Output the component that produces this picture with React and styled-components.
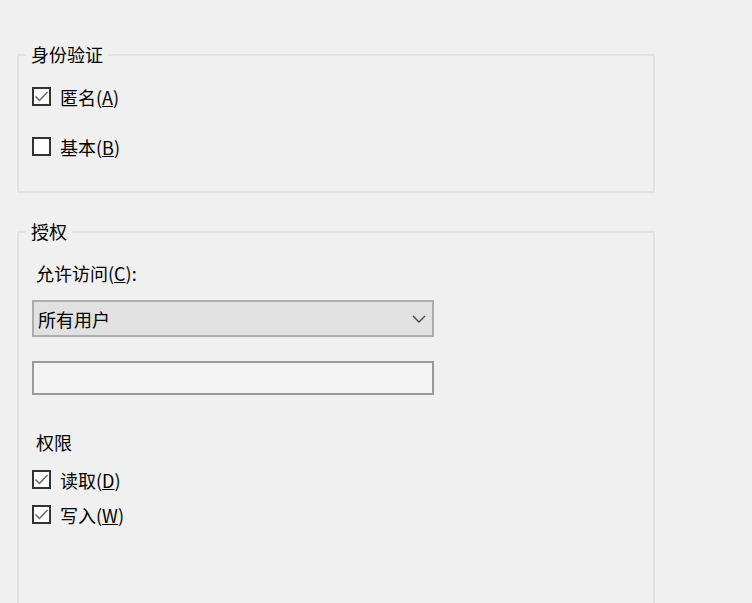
import React from "react";
import styled, { createGlobalStyle } from "styled-components";

const GlobalStyle = createGlobalStyle`
  html, body {
    margin: 0;
    padding: 0;
    background: #f0f0f0;
    overflow: hidden;
  }
  body {
    font-family: "Noto Sans CJK SC", "Noto Sans", sans-serif;
    font-size: 18px;
    color: #000;
  }
`;

function Checkbox({ checked }) {
  return (
    <Box>
      {checked && (
        <svg width="15" height="15" viewBox="0 0 15 15">
          <path d="M1.5 7.5 L5.5 11.5 L13.5 3" fill="none" stroke="#666" strokeWidth="1.5" />
        </svg>
      )}
    </Box>
  );
}

function CheckRow({ checked, text, accessKey }) {
  return (
    <Row>
      <Checkbox checked={checked} />
      <Label>
        {text}(<u>{accessKey}</u>)
      </Label>
    </Row>
  );
}

export default function App() {
  return (
    <Page>
      <GlobalStyle />
      <Group $height={139}>
        <Legend>身份验证</Legend>
        <CheckList $gap={31}>
          <CheckRow checked text="匿名" accessKey="A" />
          <CheckRow text="基本" accessKey="B" />
        </CheckList>
      </Group>

      <Group $height={380} $spaced>
        <Legend>授权</Legend>
        <Caption>
          允许访问(<u>C</u>):
        </Caption>
        <Select>
          <span>所有用户</span>
          <svg width="14" height="8" viewBox="0 0 14 8">
            <path d="M1 1 L7 7 L13 1" fill="none" stroke="#444" strokeWidth="1.4" />
          </svg>
        </Select>
        <TextBox />
        <Caption $top={35}>权限</Caption>
        <CheckList $gap={16} $top={16}>
          <CheckRow checked text="读取" accessKey="D" />
          <CheckRow checked text="写入" accessKey="W" />
        </CheckList>
      </Group>
    </Page>
  );
}

// ----- Styled Components -----
const Page = styled.div`
  padding: 54px 0 0 17px;
  display: flex;
  flex-direction: column;
`;

const Group = styled.div`
  position: relative;
  box-sizing: border-box;
  width: 638px;
  height: ${(p) => p.$height}px;
  margin-top: ${(p) => (p.$spaced ? 38 : 0)}px;
  border: 2px solid #e2e2e2;
  padding: 0 13px;
  display: flex;
  flex-direction: column;
  align-items: flex-start;
`;

const Legend = styled.div`
  position: absolute;
  top: -14px;
  left: 7px;
  padding: 0 5px;
  line-height: 24px;
  background: #f0f0f0;
`;

const CheckList = styled.div`
  display: flex;
  flex-direction: column;
  gap: ${(p) => p.$gap}px;
  margin-top: ${(p) => p.$top ?? 31}px;
`;

const Row = styled.div`
  display: flex;
  align-items: center;
  gap: 9px;
  height: 19px;
`;

const Box = styled.div`
  box-sizing: border-box;
  width: 19px;
  height: 19px;
  border: 2px solid #333;
  background: #fff;
  display: flex;
  align-items: center;
  justify-content: center;
`;

const Label = styled.span`
  line-height: 24px;
  white-space: nowrap;
`;

const Caption = styled.div`
  margin: ${(p) => p.$top ?? 28}px 0 0 4px;
  line-height: 24px;
`;

const Select = styled.div`
  box-sizing: border-box;
  width: 402px;
  height: 37px;
  margin-top: 15px;
  border: 2px solid #adadad;
  background: #e1e1e1;
  padding: 0 6px 0 4px;
  display: flex;
  align-items: center;
  justify-content: space-between;
`;

const TextBox = styled.div`
  box-sizing: border-box;
  width: 402px;
  height: 34px;
  margin-top: 24px;
  border: 2px solid #9a9a9a;
  background: #f4f4f4;
`;
